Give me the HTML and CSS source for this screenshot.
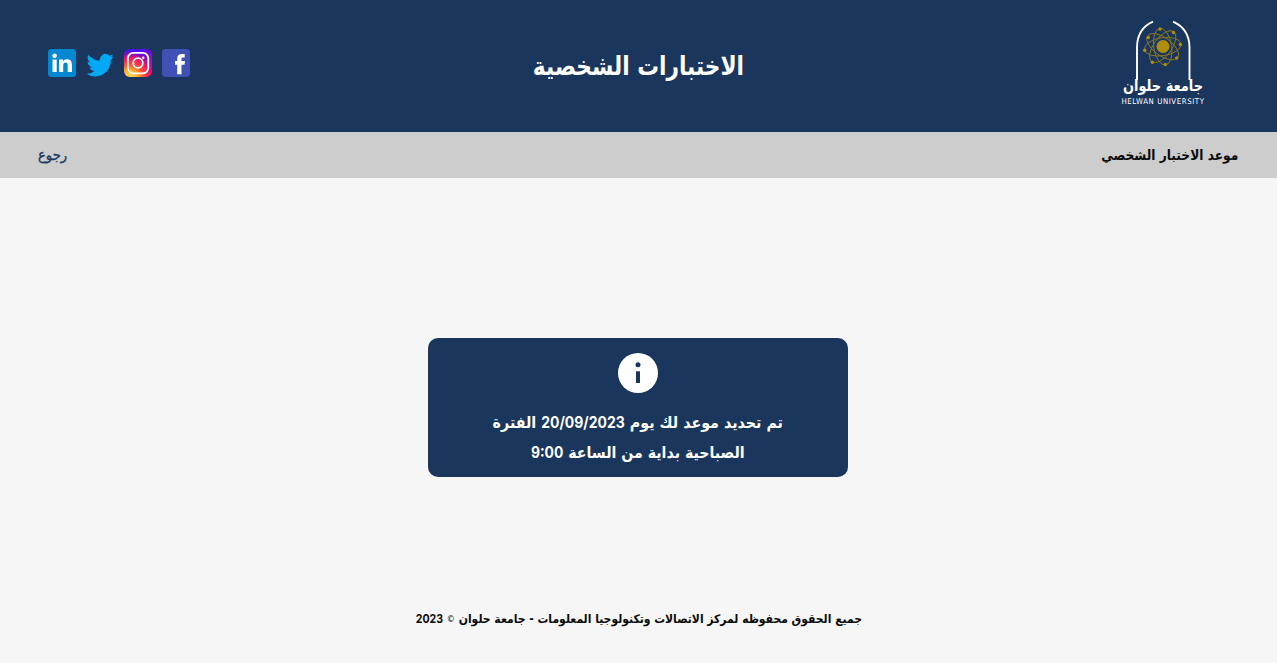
FILE: index.html
```html
<!DOCTYPE html>
<html lang="ar" dir="rtl">
<head>
<meta charset="utf-8">
<title>الاختبارات الشخصية</title>
<link rel="stylesheet" href="styles.css">
</head>
<body>
<header class="header">
  <svg class="logo" viewBox="0 0 120 110" role="img" aria-label="جامعة حلوان">
    <g fill="none" stroke="#fff" stroke-width="1.9">
      <path d="M51 11.600C41 16 35.200 25 35 37V70"/>
      <path d="M71 11.600C81 16 87.300 25 87.500 37V70"/>
    </g>
    <g fill="none" stroke="#8f7a1c" stroke-width=".9">
      <ellipse cx="60.700" cy="36.700" rx="18.500" ry="9" transform="rotate(-9 60.700 36.700)"/>
      <ellipse cx="60.700" cy="36.700" rx="18.500" ry="9" transform="rotate(36 60.700 36.700)"/>
      <ellipse cx="60.700" cy="36.700" rx="18.500" ry="9" transform="rotate(81 60.700 36.700)"/>
      <ellipse cx="60.700" cy="36.700" rx="18.500" ry="9" transform="rotate(126 60.700 36.700)"/>
    </g>
    <g fill="#b08d0c">
      <circle cx="61" cy="36.500" r="6.500"/>
      <circle cx="58" cy="19" r="1.700"/><circle cx="71.500" cy="22.500" r="1.700"/>
      <circle cx="78.400" cy="34.500" r="1.700"/><circle cx="74.700" cy="48" r="1.700"/>
      <circle cx="63.300" cy="54.500" r="1.700"/><circle cx="50.300" cy="52.200" r="1.700"/>
      <circle cx="42.700" cy="40.200" r="1.700"/><circle cx="46.300" cy="27.500" r="1.700"/>
    </g>
    <text class="logo-ar" x="61" y="81" text-anchor="middle" textLength="80" lengthAdjust="spacingAndGlyphs">جامعة حلوان</text>
    <text class="logo-en" direction="ltr" x="19.500" y="94.300" textLength="82.500" lengthAdjust="spacing">HELWAN UNIVERSITY</text>
  </svg>
  <h1 class="title"><span class="fit">الاختبارات الشخصية</span></h1>
  <nav class="social">
    <svg viewBox="0 0 28 28" aria-label="Facebook"><rect width="28" height="28" rx="3.500" fill="#3f51b5"/><path fill="#fff" d="M22.500 15.800h-3V25.200h-4.300v-9.400H13v-3.700h2.200V9.800c0-3.300 1.400-4.900 4.800-4.900h2.700v3.700h-1.800c-1.200 0-1.400.5-1.400 1.600v1.900H23z"/></svg>
    <svg viewBox="0 0 28 28" aria-label="Instagram">
      <defs>
        <linearGradient id="sky" x1="0" y1="0" x2="1" y2=".55"><stop offset="0" stop-color="#3d16f5"/><stop offset=".6" stop-color="#5b0be8"/><stop offset="1" stop-color="#a512b0"/></linearGradient>
        <radialGradient id="sun" cx=".2" cy="1.05" r="1"><stop offset="0" stop-color="#ffdc55"/><stop offset=".28" stop-color="#ffb52e"/><stop offset=".5" stop-color="#ff5138"/><stop offset=".75" stop-color="#e5146b"/><stop offset="1" stop-color="#b10ca0" stop-opacity="0"/></radialGradient>
      </defs>
      <rect width="28" height="28" rx="6" fill="url(#sky)"/><rect width="28" height="28" rx="6" fill="url(#sun)"/>
      <g fill="none" stroke="#fff" stroke-width="1.800"><rect x="3.900" y="3.900" width="20.400" height="20.400" rx="5.500"/><circle cx="14" cy="14" r="4.800"/></g><circle cx="19.200" cy="8.800" r="1.200" fill="#fff"/>
    </svg>
    <svg viewBox="0 0 28 28" aria-label="Twitter"><path fill="#03a9f4" d="M27.500 7.600a11 11 0 0 1-3 .9 5.500 5.500 0 0 0 2.400-3 11 11 0 0 1-3.500 1.300 5.550 5.550 0 0 0-9.500 5C9.300 11.600 5.200 9.400 2.400 6a5.550 5.550 0 0 0 1.700 7.400 5.500 5.500 0 0 1-2.500-.7c0 2.700 1.900 5 4.400 5.500a5.500 5.500 0 0 1-2.500.1 5.550 5.550 0 0 0 5.200 3.800A11.200 11.200 0 0 1 .500 24.700 15.700 15.700 0 0 0 9 27.500c10.500 0 16-8.700 15.800-16.600a11 11 0 0 0 2.700-3.300z"/></svg>
    <svg viewBox="0 0 28 28" aria-label="LinkedIn"><rect width="28" height="28" rx="3.500" fill="#0288d1"/><g fill="#fff"><circle cx="6.600" cy="6.800" r="2.300"/><path d="M4.500 10.500h4.200V23H4.500zM11 10.500h4v1.800c.8-1.300 2-2.100 3.900-2.100 3.600 0 5 2.100 5 5.800v7h-4.200v-6.400c0-2-.5-3.100-2-3.100-1.700 0-2.500 1.200-2.500 3.300V23H11z"/></g></svg>
  </nav>
</header>
<div class="bar"><span class="fit bar-title">موعد الاختبار الشخصي</span><a class="fit back">رجوع</a></div>
<main class="content">
  <section class="card">
    <svg class="info" viewBox="0 0 40 40"><circle cx="20" cy="20" r="20" fill="#fff"/><circle cx="20" cy="11.700" r="2.500" fill="#1a365d"/><path fill="#1a365d" d="M18 18.300h4V30h-4z"/></svg>
    <p class="message"><span class="fit line1">تم تحديد موعد لك يوم <bdi class="num">20/09/2023</bdi> الفترة</span><span class="fit line2">الصباحية بداية من الساعة <bdi class="num">9:00</bdi></span></p>
  </section>
</main>
<footer class="footer"><span class="fit rights">جميع الحقوق محفوظه لمركز الاتصالات وتكنولوجيا المعلومات - جامعة حلوان <small>©</small> <bdi class="num">2023</bdi></span></footer>
</body>
</html>
```
FILE: styles.css
```css
* { box-sizing: border-box; }
body {
  margin: 0;
  height: 663px;
  display: flex;
  flex-direction: column;
  background: #f6f6f6;
  color: #0b0b0b;
  font-family: "DejaVu Sans", sans-serif;
  overflow: hidden;
}
.fit { display: inline-block; white-space: nowrap; }
.header {
  height: 132px;
  padding: 10px 55px 0 48px;
  display: grid;
  grid-template-columns: 142px 1fr 142px;
  background: #1a365d;
  color: #fff;
}
.logo { width: 120px; height: 110px; overflow: visible; }
.logo-ar { font-family: "DejaVu Sans", sans-serif; font-size: 16px; font-weight: 700; fill: #fff; }
.logo-en { font-family: "DejaVu Sans Condensed", "DejaVu Sans", sans-serif; font-stretch: condensed; font-size: 7.8px; fill: #fff; }
.title { margin: 0; padding: 37px 0 0 7px; font-size: 26px; line-height: 38px; text-align: center; }
.title .fit { transform: scaleX(.835); }
.social { display: flex; gap: 10px; padding-top: 39px; }
.social svg { width: 28px; height: 28px; flex: none; }
.bar {
  height: 46px;
  padding: 0 39px 0 38px;
  display: flex;
  align-items: center;
  justify-content: space-between;
  background: #cdcdcd;
  font-size: 14px;
  font-weight: 700;
}
.bar-title { transform: scaleX(.872); transform-origin: right center; }
.back { color: #1a365d; font-weight: 400; -webkit-text-stroke: .35px #1a365d; transform: scaleX(.94); transform-origin: left center; }
.content { flex: 1; padding: 160px 1px 0 0; display: flex; flex-direction: column; align-items: center; }
.card {
  width: 420px;
  height: 139px;
  padding-top: 15px;
  border-radius: 10px;
  background: #1a365d;
  color: #fff;
  display: flex;
  flex-direction: column;
  align-items: center;
}
.info { width: 40px; height: 40px; }
.message { margin: 15px 0 0; display: flex; flex-direction: column; align-items: center; font-size: 16px; line-height: 30px; font-weight: 700; }
.line1 { height: 30px; transform: scaleX(.892); }
.line2 { height: 30px; transform: scaleX(.885); }
.num { font-family: Inter, sans-serif; font-size: .98em; line-height: 1; }
.footer { height: 64px; padding-top: 8px; text-align: center; font-size: 12px; line-height: 24px; font-weight: 700; }
.rights { transform: scaleX(.9); }
.footer small { font-size: 9px; font-weight: 400; line-height: 1; vertical-align: 1px; }
```
